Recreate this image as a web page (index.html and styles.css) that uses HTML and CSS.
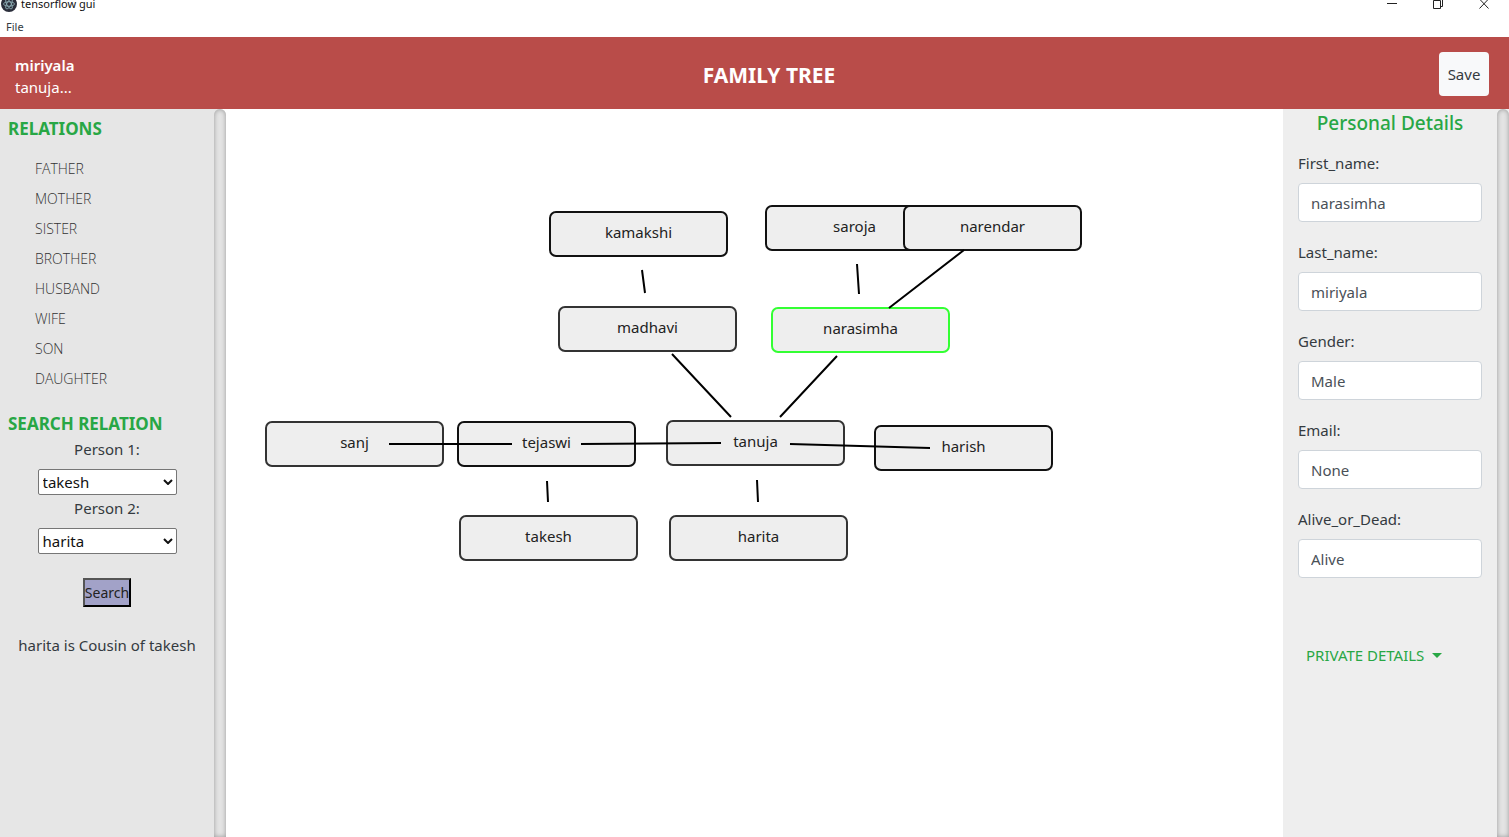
FILE: index.html
```html
<!DOCTYPE html>
<html lang="en">
<head>
<meta charset="utf-8">
<title>tensorflow gui</title>
<link rel="stylesheet" href="styles.css">
</head>
<body>
<div class="titlebar">
  <svg class="app-icon" width="16" height="16" viewBox="0 0 16 16" aria-hidden="true">
    <circle cx="8" cy="8" r="8" fill="#2b2e3b"/>
    <g fill="none" stroke="#9fc4ca" stroke-width=".7">
      <ellipse cx="8" cy="8" rx="5.5" ry="2.2"/>
      <ellipse cx="8" cy="8" rx="5.5" ry="2.2" transform="rotate(60 8 8)"/>
      <ellipse cx="8" cy="8" rx="5.5" ry="2.2" transform="rotate(120 8 8)"/>
    </g>
  </svg>
  <span class="app-title">tensorflow gui</span>
  <div class="window-controls">
    <button type="button" aria-label="Minimize"><svg width="12" height="12" viewBox="0 0 12 12"><path d="M1 5.5h10"/></svg></button>
    <button type="button" aria-label="Restore"><svg width="12" height="12" viewBox="0 0 12 12"><path d="M1.500 2.500h7v8h-7zM3.500 2.500v-2h7v8h-2"/></svg></button>
    <button type="button" aria-label="Close"><svg width="12" height="12" viewBox="0 0 12 12"><path d="M1.500 1l9 9.500M10.500 1l-9 9.500"/></svg></button>
  </div>
</div>
<nav class="menubar"><button type="button">File</button></nav>

<header class="header">
  <div class="user"><strong>miriyala</strong><span>tanuja...</span></div>
  <h1>FAMILY TREE</h1>
  <div class="actions"><button type="button" class="save">Save</button></div>
</header>

<div class="workspace">
  <aside class="sidebar">
    <div class="sidebar-content">
      <h2>RELATIONS</h2>
      <ul class="relations">
        <li><a href="#father">FATHER</a></li>
        <li><a href="#mother">MOTHER</a></li>
        <li><a href="#sister">SISTER</a></li>
        <li><a href="#brother">BROTHER</a></li>
        <li><a href="#husband">HUSBAND</a></li>
        <li><a href="#wife">WIFE</a></li>
        <li><a href="#son">SON</a></li>
        <li><a href="#daughter">DAUGHTER</a></li>
      </ul>
      <h2>SEARCH RELATION</h2>
      <form class="search">
        <label for="person1">Person 1:</label>
        <div class="select">
          <select id="person1"><option>takesh</option></select>
          <svg width="10" height="6" viewBox="0 0 10 6" aria-hidden="true"><path d="M1 1l4 4 4-4"/></svg>
        </div>
        <label for="person2">Person 2:</label>
        <div class="select">
          <select id="person2"><option>harita</option></select>
          <svg width="10" height="6" viewBox="0 0 10 6" aria-hidden="true"><path d="M1 1l4 4 4-4"/></svg>
        </div>
        <button type="button" class="search-button">Search</button>
        <output>harita is Cousin of takesh</output>
      </form>
    </div>
    <div class="scrollbar"></div>
  </aside>

  <main class="tree">
    <button type="button" class="node kamakshi">kamakshi</button>
    <button type="button" class="node saroja">saroja</button>
    <button type="button" class="node narendar">narendar</button>
    <button type="button" class="node soft madhavi">madhavi</button>
    <button type="button" class="node selected narasimha">narasimha</button>
    <button type="button" class="node soft sanj">sanj</button>
    <button type="button" class="node tejaswi">tejaswi</button>
    <button type="button" class="node soft tanuja">tanuja</button>
    <button type="button" class="node harish">harish</button>
    <button type="button" class="node soft takesh">takesh</button>
    <button type="button" class="node soft harita">harita</button>
    <svg class="links" aria-hidden="true">
      <path d="M416 161l3 23M631 155l2 30M738 141l-75 58M446 245l59 63M611 247l-57 61M163 335h123M355 335l140-1M564 335l140 4M321 372l1 21M531 371l1 22"/>
    </svg>
  </main>

  <aside class="details">
    <div class="details-content">
      <h2>Personal Details</h2>
      <form class="fields">
        <div class="field"><label for="first">First_name:</label><input id="first" type="text" value="narasimha"></div>
        <div class="field"><label for="last">Last_name:</label><input id="last" type="text" value="miriyala"></div>
        <div class="field"><label for="gender">Gender:</label><input id="gender" type="text" value="Male"></div>
        <div class="field"><label for="email">Email:</label><input id="email" type="text" value="None"></div>
        <div class="field"><label for="alive">Alive_or_Dead:</label><input id="alive" type="text" value="Alive"></div>
      </form>
      <button type="button" class="private">PRIVATE DETAILS</button>
    </div>
    <div class="scrollbar"></div>
  </aside>
</div>
</body>
</html>
```
FILE: styles.css
```css
* { box-sizing: border-box; }

body {
  margin: 0;
  min-height: 100vh;
  display: flex;
  flex-direction: column;
  background: #fff;
  color: #343a40;
  font: 15px/24px "Noto Sans", "Open Sans", sans-serif;
}

button, input, select { font: inherit; color: inherit; }
h1, h2, ul { margin: 0; padding: 0; }

.titlebar {
  display: flex;
  align-items: flex-end;
  height: 16px;
  padding: 0 19px 0 1px;
  overflow: hidden;
  color: #111;
  font-size: 11px;
}
.app-icon { flex: none; margin-bottom: 4px; }
.app-title { margin-left: 4px; }
.window-controls {
  display: flex;
  gap: 34px;
  margin-left: auto;
  margin-bottom: 6px;
}
.window-controls button {
  display: flex;
  padding: 0;
  border: 0;
  background: none;
}
.window-controls path { fill: none; stroke: #222; }

.menubar { display: flex; height: 21px; padding-left: 6px; }
.menubar button {
  padding: 0;
  border: 0;
  background: none;
  font-size: 11px;
  line-height: 20px;
}

.header {
  display: grid;
  grid-template-columns: 1fr auto 1fr;
  align-items: center;
  height: 72px;
  padding: 2px 20px 0 15px;
  background: #b94c49;
  color: #fff;
}
.user { display: flex; flex-direction: column; margin-top: 4px; line-height: 22px; }
.user strong { font-weight: 600; }
.header h1 { padding-left: 34px; font-size: 21px; font-weight: 700; margin-top: 2px; }
.actions { display: flex; justify-content: flex-end; }
.save {
  width: 50px;
  height: 44px;
  padding: 0;
  border: 0;
  border-radius: 4px;
  background: #f8f9fa;
  color: #343a40;
}

.workspace { flex: 1; display: flex; }
.scrollbar {
  flex: none;
  width: 12px;
  border-radius: 6px 6px 0 0;
  background: #e4e4e4;
  box-shadow: inset 0 0 5px #999;
}

.sidebar { flex: none; display: flex; width: 226px; background: linear-gradient(to right, #e6e6e6 220px, #fff 220px); }
.sidebar-content { flex: 1; padding-top: 8px; }
.sidebar h2 { padding-left: 8px; color: #28a745; font-size: 17px; font-weight: 700; }
.relations { list-style: none; padding: 13px 0 18px 35px; }
.relations a {
  color: #333;
  font-family: "Open Sans", sans-serif;
  font-size: 14px;
  font-weight: 300;
  line-height: 30px;
  text-decoration: none;
}
.relations li { height: 30px; }

.search { display: flex; flex-direction: column; align-items: center; }
.search label { line-height: 26px; margin-bottom: 7px; }
.select { display: grid; width: 139px; align-items: center; }
.select select {
  grid-area: 1 / 1;
  width: 100%;
  height: 26px;
  padding: 0 4px;
  border: 1px solid #767676;
  border-radius: 2px;
  background: #fff;
  color: #111;
  appearance: none;
}
.select svg { grid-area: 1 / 1; justify-self: end; margin-right: 4px; pointer-events: none; }
.select path { fill: none; stroke: #111; stroke-width: 2; }
.search-button {
  height: 29px;
  margin-top: 24px;
  padding: 0;
  border: 2px outset #555;
  background: #a2a2c8;
  color: #222;
  font-size: 14px;
}
.search output { margin-top: 26px; }

.tree { flex: 1; position: relative; }
.node {
  position: absolute;
  width: 179px;
  height: 46px;
  padding: 0 0 4px;
  border: 2px solid #111;
  border-radius: 7px;
  background: #eee;
  color: #222;
}
.soft { border-color: #333; }
.selected { border-color: #3f3; }
.kamakshi { left: 323px; top: 102px; }
.saroja { left: 539px; top: 96px; }
.narendar { left: 677px; top: 96px; }
.madhavi { left: 332px; top: 197px; }
.narasimha { left: 545px; top: 198px; }
.sanj { left: 39px; top: 312px; }
.tejaswi { left: 231px; top: 312px; }
.tanuja { left: 440px; top: 311px; }
.harish { left: 648px; top: 316px; }
.takesh { left: 233px; top: 406px; }
.harita { left: 443px; top: 406px; }
.links {
  position: absolute;
  inset: 0;
  width: 100%;
  height: 100%;
  pointer-events: none;
}
.links path { fill: none; stroke: #000; stroke-width: 2; }

.details { flex: none; display: flex; width: 226px; background: #eee; }
.details-content { flex: 1; padding: 0 15px; }
.details h2 {
  color: #28a745;
  font-size: 19px;
  font-weight: 500;
  line-height: 28px;
  text-align: center;
}
.fields { display: flex; flex-direction: column; gap: 18px; padding-top: 14px; }
.field { display: flex; flex-direction: column; gap: 8px; }
.field input {
  width: 100%;
  height: 39px;
  padding: 0 12px;
  border: 1px solid #ced4da;
  border-radius: 4px;
  background: #fff;
  color: #495057;
}
.private {
  display: flex;
  align-items: center;
  gap: 8px;
  margin-top: 65px;
  padding: 0 8px;
  border: 0;
  background: none;
  color: #28a745;
  white-space: nowrap;
}
.private::after {
  content: "";
  border: 5px solid transparent;
  border-top-color: #28a745;
  border-bottom: 0;
}
```
